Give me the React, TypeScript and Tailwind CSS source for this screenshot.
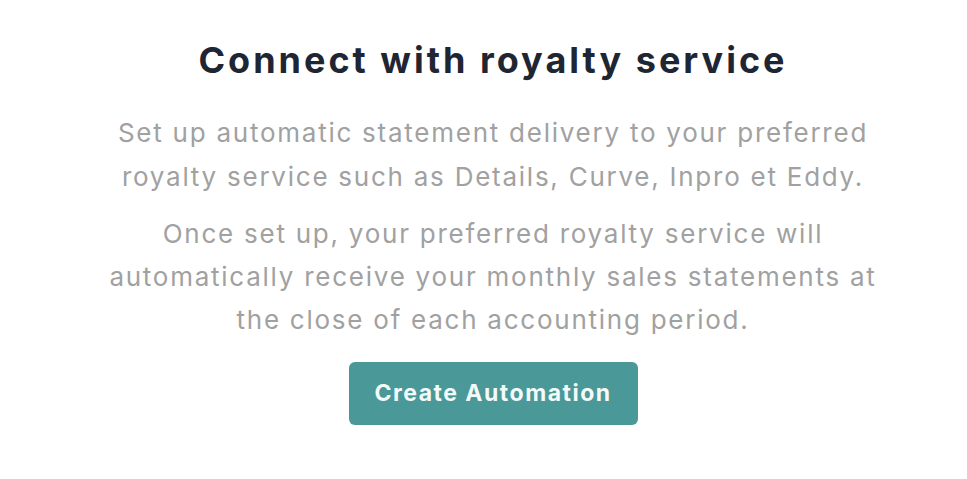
export default function App() {
  return (
    <div className="w-[967px] h-[479px] bg-white flex flex-col items-center pl-[19px]" style={{ fontFamily: '"Inter", "Open Sans", sans-serif' }}>
      <h1 className="mt-[40px] h-[40px] leading-[40px] text-[36px] font-bold text-[#1f2633] tracking-[3px] whitespace-nowrap">
        Connect with royalty service
      </h1>
      <p className="mt-[31px] text-center text-[26px] leading-[44px] text-[#a1a1a1] tracking-[1.75px] whitespace-nowrap">
        Set up automatic statement delivery to your preferred
        <br />
        royalty service such as Details, Curve, Inpro et Eddy.
      </p>
      <p className="mt-[13px] text-center text-[26px] leading-[43px] text-[#a1a1a1] tracking-[1.75px] whitespace-nowrap">
        Once set up, your preferred royalty service will
        <br />
        automatically receive your monthly sales statements at
        <br />
        the close of each accounting period.
      </p>
      <button className="mt-[21px] w-[289px] h-[63px] rounded-[6px] bg-[#4a9897] text-[#f2fafa] text-[23px] font-bold tracking-[1.5px]">
        Create Automation
      </button>
    </div>
  );
}
